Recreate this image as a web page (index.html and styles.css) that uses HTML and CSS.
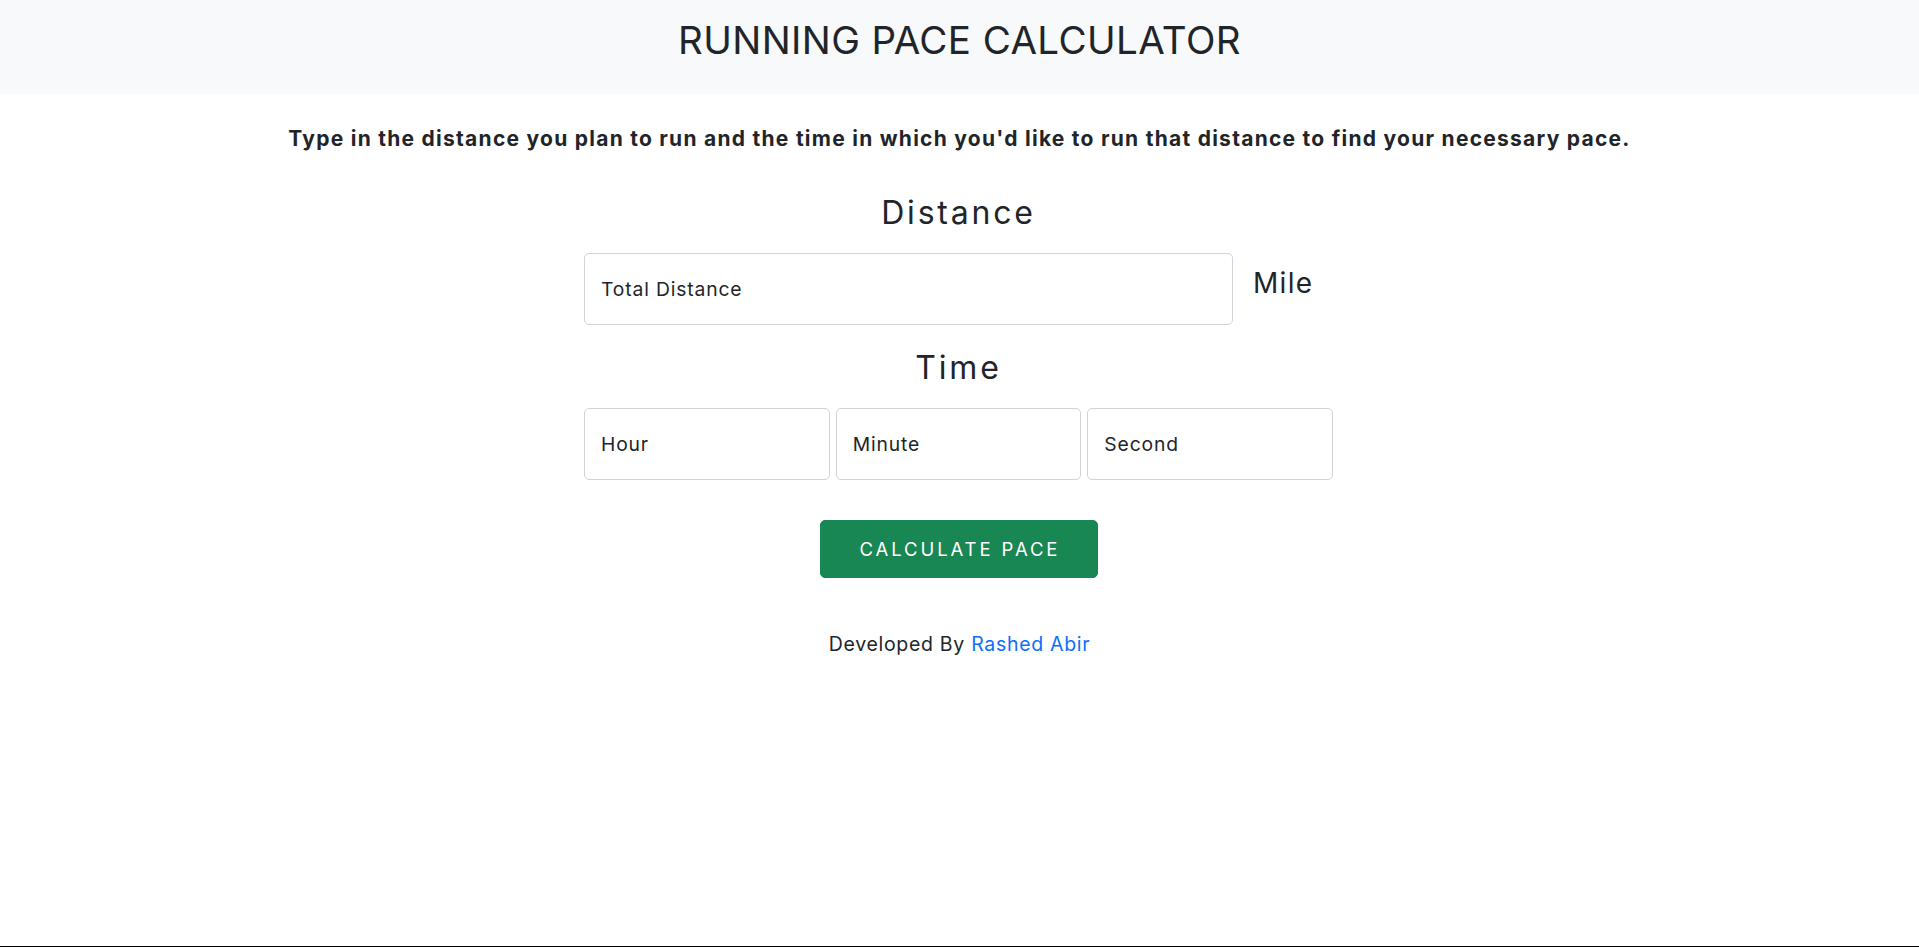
FILE: index.html
```html
<!DOCTYPE html>
<html lang="en">
<head>
<meta charset="utf-8">
<title>Running Pace Calculator</title>
<link rel="stylesheet" href="styles.css">
</head>
<body>
<div class="page">
  <header class="header">
    <h1 class="title">RUNNING PACE CALCULATOR</h1>
  </header>
  <main class="main">
    <p class="lead">Type in the distance you plan to run and the time in which you'd like to run that distance to find your necessary pace.</p>
    <section class="form">
      <h2 class="section-title">Distance</h2>
      <div class="distance-row">
        <input class="field field-distance" type="text" placeholder="Total Distance">
        <span class="unit">Mile</span>
      </div>
      <h2 class="section-title section-time">Time</h2>
      <div class="time-row">
        <input class="field" type="text" placeholder="Hour">
        <input class="field" type="text" placeholder="Minute">
        <input class="field" type="text" placeholder="Second">
      </div>
      <div class="actions">
        <button class="btn" type="button">CALCULATE PACE</button>
      </div>
    </section>
    <p class="credit">Developed By <a class="credit-link" href="#">Rashed Abir</a></p>
  </main>
</div>
</body>
</html>
```
FILE: styles.css
```css
* { box-sizing: border-box; }
html, body { margin: 0; padding: 0; }
body {
  font-family: Inter, "Noto Sans", "Liberation Sans", sans-serif;
  color: #212529;
  background: #fff;
}
.page {
  min-height: 100vh;
  border-bottom: 1px solid #000;
}
.header {
  background: #f8f9fa;
  height: 94px;
  padding-top: 16px;
}
.title {
  margin: 0;
  text-align: center;
  font-weight: 400;
  font-size: 38.5px;
  line-height: 48px;
  letter-spacing: 0.4px;
  color: #212529;
}
.main {
  display: flex;
  flex-direction: column;
  align-items: center;
}
.lead {
  margin: 29px 0 0;
  font-size: 21px;
  line-height: 31px;
  font-weight: 700;
  letter-spacing: 1.26px;
  text-align: center;
}
.form {
  width: 749px;
  margin-right: 2px;
  display: flex;
  flex-direction: column;
}
.section-title {
  margin: 40px 0 0;
  text-align: center;
  font-weight: 400;
  font-size: 32px;
  line-height: 37px;
  letter-spacing: 2.8px;
}
.section-time { margin-top: 24px; }
.distance-row {
  display: flex;
  align-items: flex-start;
  margin-top: 22px;
}
.field {
  display: block;
  height: 72px;
  padding: 20px 16px;
  border: 1px solid #ced4da;
  border-radius: 5px;
  font-family: inherit;
  font-size: 19.3px;
  line-height: 30px;
  letter-spacing: 0.85px;
  color: #212529;
  background: #fff;
  outline: none;
  min-width: 0;
}
.field::placeholder { color: #212529; opacity: 1; }
.field-distance { width: 649px; }
.unit {
  margin: 14px 0 0 20px;
  font-size: 28px;
  line-height: 32px;
  letter-spacing: 1.3px;
  font-weight: 400;
}
.time-row {
  display: grid;
  grid-template-columns: repeat(3, 1fr);
  gap: 6px;
  margin-top: 22px;
}
.time-row .field { width: 100%; }
.actions {
  display: flex;
  justify-content: center;
  margin-top: 40px;
}
.btn {
  width: 278px;
  height: 58px;
  padding: 13px 0;
  border: 1px solid #198754;
  border-radius: 5px;
  background: #198754;
  color: #fff;
  font-family: inherit;
  font-size: 18.5px;
  line-height: 30px;
  letter-spacing: 2.9px;
  text-indent: 2.9px;
  cursor: pointer;
}
.credit {
  margin: 51px 0 0;
  font-size: 19.5px;
  line-height: 30px;
  letter-spacing: 0.7px;
  text-align: center;
}
.credit-link {
  color: #0d6efd;
  text-decoration: none;
}
```
